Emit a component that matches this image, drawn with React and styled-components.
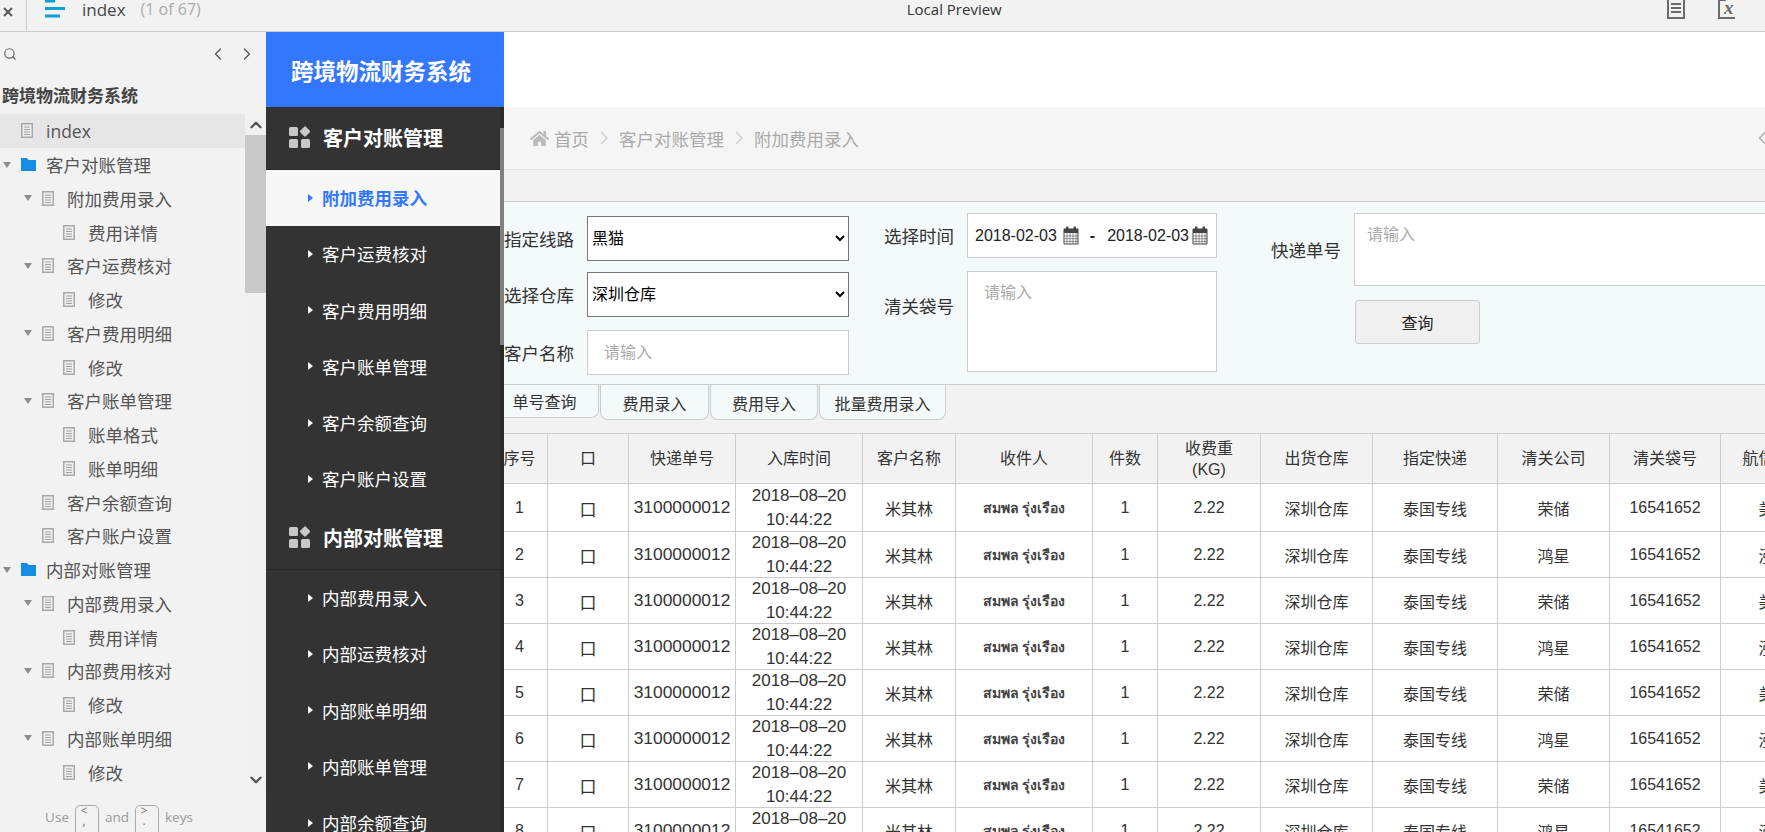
import React from 'react';
import styled, { createGlobalStyle } from 'styled-components';
import { Search, ChevronLeft, ChevronRight, ChevronUp, ChevronDown } from 'lucide-react';
import { FaHome } from 'react-icons/fa';

const GlobalStyle = createGlobalStyle`
  html, body { margin: 0; padding: 0; height: 100%; overflow: hidden; }
  body { font-family: "Liberation Sans", "Noto Sans CJK SC", "DejaVu Sans", sans-serif; color: #333; }
  * { box-sizing: border-box; }
`;

const TREE = [
  { label: 'index', level: 0, icon: 'doc', active: true },
  { label: '客户对账管理', level: 0, icon: 'folder', open: true },
  { label: '附加费用录入', level: 1, icon: 'doc', open: true },
  { label: '费用详情', level: 2, icon: 'doc' },
  { label: '客户运费核对', level: 1, icon: 'doc', open: true },
  { label: '修改', level: 2, icon: 'doc' },
  { label: '客户费用明细', level: 1, icon: 'doc', open: true },
  { label: '修改', level: 2, icon: 'doc' },
  { label: '客户账单管理', level: 1, icon: 'doc', open: true },
  { label: '账单格式', level: 2, icon: 'doc' },
  { label: '账单明细', level: 2, icon: 'doc' },
  { label: '客户余额查询', level: 1, icon: 'doc' },
  { label: '客户账户设置', level: 1, icon: 'doc' },
  { label: '内部对账管理', level: 0, icon: 'folder', open: true },
  { label: '内部费用录入', level: 1, icon: 'doc', open: true },
  { label: '费用详情', level: 2, icon: 'doc' },
  { label: '内部费用核对', level: 1, icon: 'doc', open: true },
  { label: '修改', level: 2, icon: 'doc' },
  { label: '内部账单明细', level: 1, icon: 'doc', open: true },
  { label: '修改', level: 2, icon: 'doc' },
];

const NAV = [
  {
    title: '客户对账管理',
    items: ['附加费用录入', '客户运费核对', '客户费用明细', '客户账单管理', '客户余额查询', '客户账户设置'],
  },
  {
    title: '内部对账管理',
    items: ['内部费用录入', '内部运费核对', '内部账单明细', '内部账单管理', '内部余额查询', '内部账户设置'],
  },
];

const COLUMNS = [
  { title: '序号', width: 56 },
  { title: '口', width: 81 },
  { title: '快递单号', width: 107 },
  { title: '入库时间', width: 127 },
  { title: '客户名称', width: 93 },
  { title: '收件人', width: 137 },
  { title: '件数', width: 65 },
  { title: <>收费重<br />(KG)</>, width: 103 },
  { title: '出货仓库', width: 112 },
  { title: '指定快递', width: 125 },
  { title: '清关公司', width: 112 },
  { title: '清关袋号', width: 111 },
  { title: '航信公司', width: 108 },
];

const ROWS = [1, 2, 3, 4, 5, 6, 7, 8];

const Page = styled.div`
  width: 100vw;
  height: 100vh;
  display: flex;
  flex-direction: column;
  overflow: hidden;
  background: #fff;
`;

const TopBar = styled.header`
  height: 32px;
  flex: none;
  display: flex;
  background: #f2f2f2;
  border-bottom: 1px solid #ccc;
  font-size: 16px;
  color: #333;
`;

const CloseCell = styled.div`
  width: 27px;
  height: 31px;
  border-right: 1px solid #ccc;
  padding: 3px 0 0 3px;
`;

const TopTitle = styled.div`
  display: flex;
  align-items: center;
  height: 18px;
  gap: 15px;
  margin-left: 18px;
`;

const PageName = styled.span`
  font-family: "Open Sans", sans-serif;
  font-size: 17px;
  color: #444;
  margin-left: 2px;
`;

const PageCount = styled.span`
  font-family: "Open Sans", sans-serif;
  font-size: 16px;
  color: #aaa;
`;

const PreviewName = styled.div`
  margin-left: 706px;
  height: 18px;
  line-height: 18px;
  font-family: "Open Sans", sans-serif;
  font-size: 15px;
`;

const TopIcons = styled.div`
  margin-left: auto;
  margin-right: 27px;
  display: flex;
  gap: 33px;
`;

const Body = styled.div`
  flex: 1;
  min-height: 0;
  display: flex;
`;

const Sidebar = styled.aside`
  width: 266px;
  flex: none;
  display: flex;
  flex-direction: column;
  background: #f2f2f2;
  overflow: hidden;
`;

const SearchRow = styled.div`
  height: 44px;
  flex: none;
  display: flex;
  align-items: center;
  padding: 0 9px 0 3px;
  color: #666;
`;

const ArrowGroup = styled.div`
  margin-left: auto;
  display: flex;
  gap: 9px;
  color: #555;
`;

const ProjectTitle = styled.div`
  height: 38px;
  flex: none;
  padding-left: 2px;
  line-height: 42px;
  font-size: 17px;
  font-weight: 700;
  color: #444;
`;

const TreeArea = styled.div`
  flex: none;
  height: 676px;
  display: flex;
`;

const TreeList = styled.div`
  flex: 1;
  overflow: hidden;
`;

const TreeRow = styled.div`
  height: 33.75px;
  display: flex;
  align-items: center;
  padding-left: ${(p) => 3 + p.$level * 21}px;
  background: ${(p) => (p.$active ? '#e6e6e6' : 'transparent')};
  font-size: 17.5px;
  color: #555;
`;

const TreeArrow = styled.span`
  width: 18px;
  flex: none;
  display: flex;
`;

const TreeIcon = styled.span`
  width: 25px;
  flex: none;
  display: flex;
`;

const TreeLabel = styled.span`
  white-space: nowrap;
  font-family: ${(p) => (p.$latin ? '"Open Sans", sans-serif' : 'inherit')};
`;

const ScrollRail = styled.div`
  width: 21px;
  flex: none;
  display: flex;
  flex-direction: column;
  background: #f1f1f1;
  color: #505050;
`;

const RailButton = styled.div`
  height: 21px;
  flex: none;
  display: flex;
  align-items: center;
  justify-content: center;
`;

const RailThumb = styled.div`
  height: 158px;
  flex: none;
  background: #c8c8c8;
`;

const RailFill = styled.div`
  flex: 1;
`;

const KeyHint = styled.div`
  flex: 1;
  display: flex;
  align-items: flex-start;
  justify-content: center;
  gap: 6px;
  padding: 17px 28px 0 0;
  font-family: "Open Sans", sans-serif;
  font-size: 13.5px;
  line-height: 20px;
  color: #999;
`;

const KeyCap = styled.span`
  width: 24px;
  height: 34px;
  margin-top: -2px;
  border: 1px solid #aaa;
  border-radius: 5px;
  display: flex;
  flex-direction: column;
  align-items: center;
  padding: 0 6px 0 0;
  font-size: 12px;
  line-height: 10px;
  color: #777;
`;

const NavColumn = styled.nav`
  width: 238px;
  flex: none;
  display: flex;
  flex-direction: column;
  background: #333;
  overflow: hidden;
`;

const NavBrand = styled.div`
  height: 75px;
  flex: none;
  display: flex;
  align-items: center;
  padding-left: 25px;
  background: #3377ff;
  color: #fff;
  font-size: 22.5px;
  font-weight: 700;
`;

const NavBody = styled.div`
  flex: 1;
  min-height: 0;
  display: flex;
`;

const NavList = styled.div`
  flex: 1;
  overflow: hidden;
`;

const NavSection = styled.div`
  height: 62.5px;
  display: flex;
  align-items: center;
  gap: 13px;
  padding-left: 23px;
  color: #fff;
  font-size: 20px;
  font-weight: 700;
  border-bottom: 1px solid #282828;
`;

const NavItem = styled.div`
  height: 56.25px;
  display: flex;
  align-items: center;
  gap: 9px;
  padding-left: 42px;
  font-size: 17.5px;
  font-weight: ${(p) => (p.$active ? 700 : 400)};
  color: ${(p) => (p.$active ? '#3377ff' : '#fff')};
  background: ${(p) => (p.$active ? '#f7f7f7' : 'transparent')};
`;

const NavCaret = styled.span`
  width: 0;
  height: 0;
  border-left: 5px solid currentColor;
  border-top: 4px solid transparent;
  border-bottom: 4px solid transparent;
`;

const NavTrack = styled.div`
  width: 4px;
  flex: none;
  background: #2a2a2a;
  padding-top: 21px;
`;

const NavThumb = styled.div`
  height: 217px;
  background: #808080;
`;

const Main = styled.main`
  flex: 1;
  min-width: 0;
  display: flex;
  flex-direction: column;
  overflow: hidden;
  background: #f2f2f2;
`;

const WhiteBand = styled.div`
  height: 75px;
  flex: none;
  background: #fff;
`;

const Breadcrumb = styled.div`
  height: 63px;
  flex: none;
  display: flex;
  align-items: center;
  gap: 11px;
  padding-left: 26px;
  background: #f5f5f5;
  border-bottom: 1px solid #e5e5e5;
  font-size: 17.5px;
  color: #aaa;
`;

const HomeCrumb = styled.span`
  display: flex;
  align-items: center;
  gap: 5px;
`;

const BackArrow = styled.span`
  margin-left: auto;
  margin-right: -7px;
  display: flex;
  color: #aaa;
`;

const Strip = styled.div`
  height: 32px;
  flex: none;
  background: #f2f2f2;
  border-bottom: 1px solid #ccc;
`;

const FilterPanel = styled.form`
  height: 183px;
  flex: none;
  display: flex;
  background: #f4f9f9;
  border-bottom: 1px solid #ccc;
  font-size: 17.5px;
  color: #333;
`;

const FilterColumn = styled.div`
  flex: none;
  display: flex;
  flex-direction: column;
  margin-left: ${(p) => p.$left || 0}px;
`;

const FieldRow = styled.div`
  display: flex;
  align-items: ${(p) => p.$align || 'center'};
  margin-top: ${(p) => p.$top}px;
`;

const FieldLabel = styled.label`
  width: 83px;
  flex: none;
  white-space: nowrap;
  margin-top: ${(p) => p.$top || 0}px;
`;

const LineSelect = styled.select`
  width: 262px;
  height: 45px;
  border: 1px solid #767676;
  border-radius: 0;
  background-color: #fff;
  font-family: inherit;
  font-size: 16px;
  color: #000;
`;

const TextField = styled.input`
  width: 262px;
  height: 45px;
  padding: 0 16px;
  border: 1px solid #ccc;
  background: #fff;
  font-family: inherit;
  font-size: 16px;
  &::placeholder { color: #aaa; }
`;

const TextBox = styled.textarea`
  display: block;
  width: ${(p) => p.$width}px;
  height: ${(p) => p.$height}px;
  padding: ${(p) => (p.$pad ? p.$pad : '7px 16px')};
  border: 1px solid #ccc;
  background: #fff;
  resize: none;
  font-family: inherit;
  font-size: 16px;
  &::placeholder { color: #aaa; }
`;

const DateBox = styled.div`
  width: 250px;
  height: 45px;
  display: flex;
  align-items: center;
  padding-left: 7px;
  border: 1px solid #ccc;
  background: #fff;
  font-size: 16px;
  color: #222;
`;

const DateDash = styled.span`
  margin: 0 12px 0 11px;
  font-weight: 700;
`;

const CalendarSlot = styled.span`
  display: flex;
  margin-left: ${(p) => p.$left}px;
`;

const QueryButton = styled.button`
  width: 125px;
  height: 44px;
  margin: 14px 0 0 84px;
  border: 1px solid #ccc;
  border-radius: 3px;
  background: #f0f0f0;
  font-family: inherit;
  font-size: 16px;
  color: #222;
`;

const TabRow = styled.div`
  flex: none;
  display: flex;
  align-items: flex-start;
  gap: 1px;
  height: 48px;
  margin-left: -13px;
`;

const Tab = styled.div`
  width: ${(p) => p.$width}px;
  height: ${(p) => (p.$active ? 33 : 35)}px;
  flex: none;
  display: flex;
  align-items: center;
  justify-content: center;
  padding-top: ${(p) => (p.$active ? 0 : 2)}px;
  background: #f4f9f9;
  border: 1px solid #ccc;
  border-top: none;
  border-left: ${(p) => (p.$active ? 'none' : '1px solid #ccc')};
  border-radius: 0 0 8px 8px;
  font-size: 16px;
  color: #333;
`;

const DataTable = styled.table`
  flex: none;
  table-layout: fixed;
  border-collapse: collapse;
  width: 1337px;
  margin-left: -13px;
  background: #fff;
  font-size: 16px;
  color: #333;
  th, td {
    padding: 0;
    border: 1px solid #ccc;
    text-align: center;
    vertical-align: middle;
    white-space: nowrap;
    overflow: visible;
  }
  th {
    height: 50px;
    font-weight: 400;
    line-height: 21px;
    background: #f2f2f2;
  }
  tbody tr { height: 45px; }
  tbody tr:first-child { height: 48px; }
`;

const DateCell = styled.div`
  margin: -1px 0;
  font-size: 17px;
  line-height: 23.5px;
`;

const NumberCell = styled.span`
  font-size: ${(p) => p.$size || 16}px;
`;

const CheckGlyph = styled.span`
  font-size: 17px;
  position: relative;
  top: 1px;
`;

const ThaiName = styled.span`
  font-size: 14px;
  font-weight: 700;
  color: #444;
`;

const DocIcon = () => (
  <svg width="12" height="15" viewBox="0 0 12 15">
    <rect x="0.75" y="0.75" width="10.5" height="13.5" fill="#efefef" stroke="#a8a8a8" strokeWidth="1.5" />
    <path d="M3 4h6M3 6.5h6M3 9h6M3 11.5h6" stroke="#a0a0a0" strokeWidth="1" />
  </svg>
);

const FolderIcon = () => (
  <svg width="15" height="13" viewBox="0 0 15 13">
    <path d="M0 0h6l1.5 2H15v11H0z" fill="#148de2" />
  </svg>
);

const TreeCaret = () => (
  <svg width="8" height="6" viewBox="0 0 8 6">
    <path d="M0 0h8L4 6z" fill="#8c8c8c" />
  </svg>
);

const HamburgerIcon = () => (
  <svg width="20" height="18" viewBox="0 0 20 18">
    <path d="M0 1h10M0 8.5h20M0 16h15" stroke="#0e9fd8" strokeWidth="3" />
  </svg>
);

const CloseIcon = () => (
  <svg width="10" height="10" viewBox="0 0 10 10">
    <path d="M1 1l8 8M9 1l-8 8" stroke="#555" strokeWidth="1.8" />
  </svg>
);

const NoteIcon = () => (
  <svg width="18" height="19" viewBox="0 0 18 19">
    <rect x="1" y="-2" width="16" height="20" fill="none" stroke="#6b6b6b" strokeWidth="2" />
    <path d="M4 4h10M4 8h10M4 12h10" stroke="#6b6b6b" strokeWidth="2" />
  </svg>
);

const FormulaIcon = () => (
  <svg width="20" height="19" viewBox="0 0 20 19">
    <path d="M8 0H1v18h16" fill="none" stroke="#6b6b6b" strokeWidth="2" />
    <text x="6" y="14" fontFamily="Liberation Serif, serif" fontStyle="italic" fontWeight="700" fontSize="19" fill="#6b6b6b">x</text>
  </svg>
);

const SectionIcon = () => (
  <svg width="21" height="23" viewBox="0 0 21 23">
    <rect x="0" y="1" width="9" height="9" rx="1.5" fill="#c8c8c8" />
    <rect x="12" y="1.5" width="8" height="8" rx="1.5" fill="#c8c8c8" transform="rotate(45 16 5.5)" />
    <rect x="0" y="13" width="9" height="9" rx="1.5" fill="#c8c8c8" />
    <rect x="12" y="13" width="9" height="9" rx="1.5" fill="#c8c8c8" />
  </svg>
);

const CrumbArrow = () => (
  <svg width="8" height="16" viewBox="0 0 8 16">
    <path d="M1 2l6 6-6 6" fill="none" stroke="#ccc" strokeWidth="1.3" />
  </svg>
);

const CalendarIcon = () => (
  <svg width="16" height="19" viewBox="0 0 16 19">
    <path d="M1 3h14v15H1z" fill="#fff" stroke="#444" strokeWidth="1" />
    <path d="M1 3h14v4H1z" fill="#444" />
    <rect x="3" y="0.5" width="2.5" height="5" rx="1" fill="#444" />
    <rect x="10.5" y="0.5" width="2.5" height="5" rx="1" fill="#444" />
    <path d="M1 10h14M1 12.7h14M1 15.4h14M4 7v11M7 7v11M10 7v11M13 7v11" stroke="#666" strokeWidth="0.7" />
  </svg>
);

const App = () => {
  return (
    <Page>
      <GlobalStyle />
      <TopBar>
        <CloseCell><CloseIcon /></CloseCell>
        <TopTitle>
          <HamburgerIcon />
          <PageName>index</PageName>
          <PageCount>(1 of 67)</PageCount>
        </TopTitle>
        <PreviewName>Local Preview</PreviewName>
        <TopIcons>
          <NoteIcon />
          <FormulaIcon />
        </TopIcons>
      </TopBar>

      <Body>
        {/* Axure page tree */}
        <Sidebar>
          <SearchRow>
            <Search size={14} />
            <ArrowGroup>
              <ChevronLeft size={20} strokeWidth={1.6} />
              <ChevronRight size={20} strokeWidth={1.6} />
            </ArrowGroup>
          </SearchRow>
          <ProjectTitle>跨境物流财务系统</ProjectTitle>
          <TreeArea>
            <TreeList>
              {TREE.map((row, i) => (
                <TreeRow key={i} $level={row.level} $active={row.active}>
                  <TreeArrow>{row.open && <TreeCaret />}</TreeArrow>
                  <TreeIcon>{row.icon === 'folder' ? <FolderIcon /> : <DocIcon />}</TreeIcon>
                  <TreeLabel $latin={row.label === 'index'}>{row.label}</TreeLabel>
                </TreeRow>
              ))}
            </TreeList>
            <ScrollRail>
              <RailButton><ChevronUp size={18} strokeWidth={3} /></RailButton>
              <RailThumb />
              <RailFill />
              <RailButton><ChevronDown size={18} strokeWidth={3} /></RailButton>
            </ScrollRail>
          </TreeArea>
          <KeyHint>
            <span>Use</span>
            <KeyCap><span>&lt;</span><span>,</span></KeyCap>
            <span>and</span>
            <KeyCap><span>&gt;</span><span>.</span></KeyCap>
            <span>keys</span>
          </KeyHint>
        </Sidebar>

        {/* app side menu */}
        <NavColumn>
          <NavBrand>跨境物流财务系统</NavBrand>
          <NavBody>
            <NavList>
              {NAV.map((group) => (
                <div key={group.title}>
                  <NavSection>
                    <SectionIcon />
                    {group.title}
                  </NavSection>
                  {group.items.map((item) => (
                    <NavItem key={item} $active={item === '附加费用录入'}>
                      <NavCaret />
                      {item}
                    </NavItem>
                  ))}
                </div>
              ))}
            </NavList>
            <NavTrack><NavThumb /></NavTrack>
          </NavBody>
        </NavColumn>

        <Main>
          <WhiteBand />
          <Breadcrumb>
            <HomeCrumb><FaHome size={19} color="#bbb" />首页</HomeCrumb>
            <CrumbArrow />
            <span>客户对账管理</span>
            <CrumbArrow />
            <span>附加费用录入</span>
            <BackArrow><ChevronLeft size={20} strokeWidth={1.5} /></BackArrow>
          </Breadcrumb>
          <Strip />

          <FilterPanel>
            <FilterColumn>
              <FieldRow $top={14}>
                <FieldLabel>指定线路</FieldLabel>
                <LineSelect defaultValue="黑猫"><option>黑猫</option></LineSelect>
              </FieldRow>
              <FieldRow $top={11}>
                <FieldLabel>选择仓库</FieldLabel>
                <LineSelect defaultValue="深圳仓库"><option>深圳仓库</option></LineSelect>
              </FieldRow>
              <FieldRow $top={13}>
                <FieldLabel>客户名称</FieldLabel>
                <TextField placeholder="请输入" />
              </FieldRow>
            </FilterColumn>

            <FilterColumn $left={35}>
              <FieldRow $top={11}>
                <FieldLabel>选择时间</FieldLabel>
                <DateBox>
                  2018-02-03
                  <CalendarSlot $left={6}><CalendarIcon /></CalendarSlot>
                  <DateDash>-</DateDash>
                  2018-02-03
                  <CalendarSlot $left={3}><CalendarIcon /></CalendarSlot>
                </DateBox>
              </FieldRow>
              <FieldRow $top={13} $align="flex-start">
                <FieldLabel $top={22}>清关袋号</FieldLabel>
                <TextBox $width={250} $height={101} placeholder="请输入" />
              </FieldRow>
            </FilterColumn>

            <FilterColumn $left={54}>
              <FieldRow $top={11}>
                <FieldLabel>快递单号</FieldLabel>
                <TextBox $width={500} $height={73} $pad="7px 12px" placeholder="请输入" />
              </FieldRow>
              <QueryButton type="button">查询</QueryButton>
            </FilterColumn>
          </FilterPanel>

          <TabRow>
            <Tab $active $width={108}>单号查询</Tab>
            <Tab $width={109}>费用录入</Tab>
            <Tab $width={108}>费用导入</Tab>
            <Tab $width={127}>批量费用录入</Tab>
          </TabRow>

          <DataTable>
            <colgroup>
              {COLUMNS.map((col, i) => <col key={i} width={col.width} />)}
            </colgroup>
            <thead>
              <tr>
                {COLUMNS.map((col, i) => <th key={i}>{col.title}</th>)}
              </tr>
            </thead>
            <tbody>
              {ROWS.map((n) => (
                <tr key={n}>
                  <td><NumberCell>{n}</NumberCell></td>
                  <td><CheckGlyph>口</CheckGlyph></td>
                  <td><NumberCell $size={17.4}>3100000012</NumberCell></td>
                  <td><DateCell>2018–08–20<br />10:44:22</DateCell></td>
                  <td>米其林</td>
                  <td><ThaiName>สมพล รุ่งเรือง</ThaiName></td>
                  <td><NumberCell>1</NumberCell></td>
                  <td><NumberCell>2.22</NumberCell></td>
                  <td>深圳仓库</td>
                  <td>泰国专线</td>
                  <td>{n % 2 ? '荣储' : '鸿星'}</td>
                  <td><NumberCell>16541652</NumberCell></td>
                  <td>{n % 2 ? '美航' : '泓远'}</td>
                </tr>
              ))}
            </tbody>
          </DataTable>
        </Main>
      </Body>
    </Page>
  );
};

export default App;
